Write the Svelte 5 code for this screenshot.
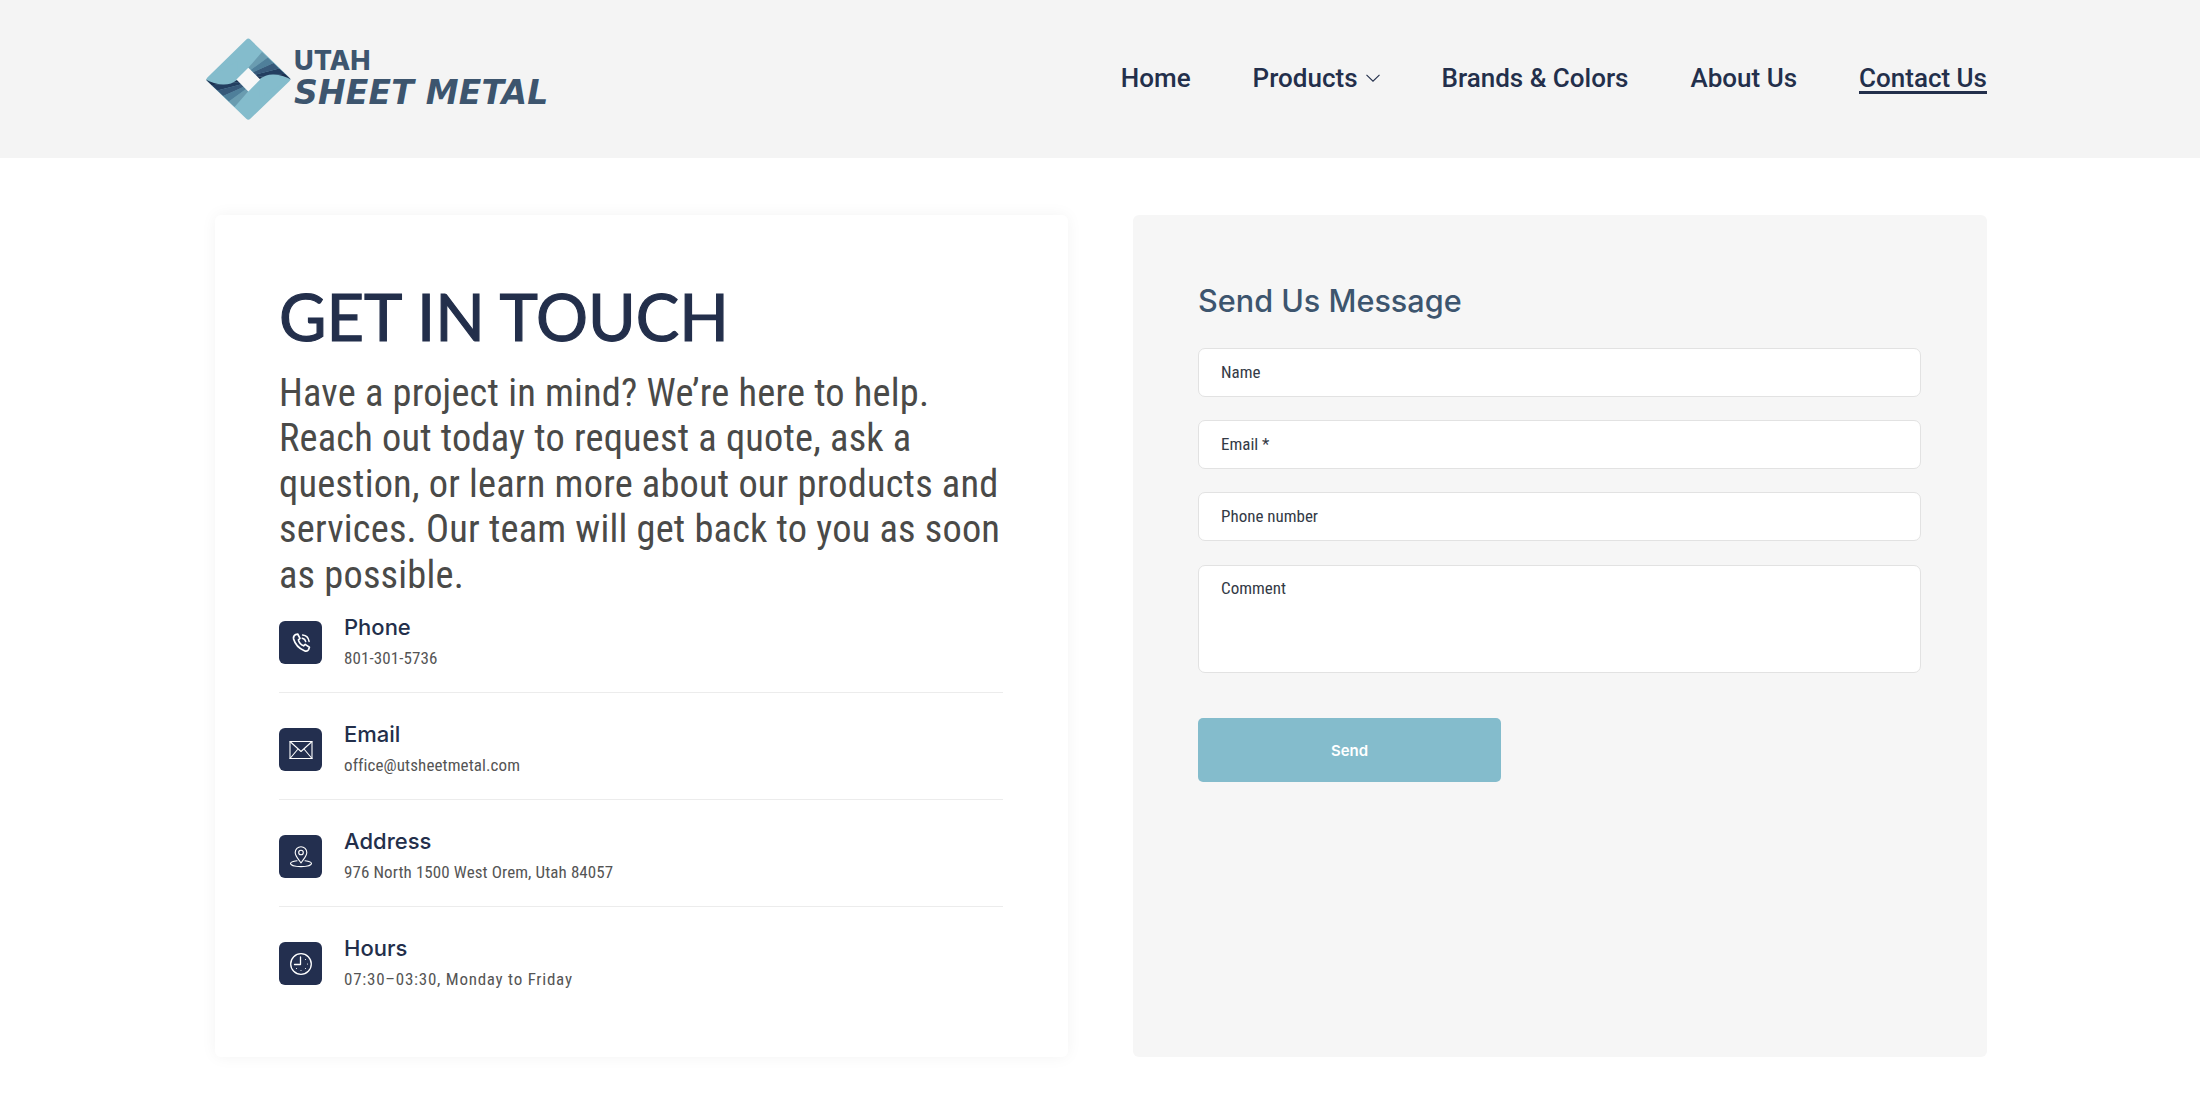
<script lang="ts">
  const navItems = [
    { label: "Home" },
    { label: "Products", caret: true },
    { label: "Brands & Colors" },
    { label: "About Us" },
    { label: "Contact Us", active: true },
  ];

  const contacts = [
    { icon: "phone", title: "Phone", text: "801-301-5736" },
    { icon: "mail", title: "Email", text: "office@utsheetmetal.com" },
    { icon: "pin", title: "Address", text: "976 North 1500 West Orem, Utah 84057" },
    { icon: "clock", title: "Hours", text: "07:30–03:30, Monday to Friday", wide: true },
  ];

  // logo stripes fan out from the white square to the outer edge
  const stripeColors = ["#6a9cb0", "#4f7f9a", "#37597a", "#233e60", "#1c3050"];
  const lerp = (a: number[], b: number[], t: number) => [a[0] + (b[0] - a[0]) * t, a[1] + (b[1] - a[1]) * t];
  const stripes = stripeColors.map((color, i) => {
    const pts = [
      lerp([56, 14], [84.7, 41.3], i / 5),
      lerp([56, 14], [84.7, 41.3], (i + 1) / 5),
      lerp([42.3, 29.7], [53.3, 41.3], (i + 1) / 5),
      lerp([42.3, 29.7], [53.3, 41.3], i / 5),
    ];
    return { color, points: pts.map((p) => p.join(",")).join(" ") };
  });
</script>

<header class="site-header">
  <a class="logo" href="#top">
    <svg class="logo-mark" viewBox="0 0 85 83" width="85" height="83" aria-hidden="true">
      <path d="M40.3 1.6 Q42.3 -.4 44.3 1.6 L83.4 39.4 Q85.3 41.3 83.4 43.2 L44.3 80.8 Q42.3 82.8 40.3 80.8 L1.4 43.2 Q-.5 41.3 1.4 39.4 Z" fill="#84bccc" />
      {#each [0, 180] as turn}
        <g transform="rotate({turn} 42.3 41.5)">
          {#each stripes as s}
            <polygon points={s.points} fill={s.color} />
          {/each}
          <path d="M53.3 41.3 Q60 36 68 36.500 Q77 37.200 84.700 41.300 L53.300 60 Z" fill="#84bccc" />
        </g>
      {/each}
      <polygon points="42.3,29.7 54.2,41.5 42.3,53.5 30.4,41.5" fill="#f7f7f7" />
    </svg>
    <span class="logo-text">
      <span class="logo-utah">UTAH</span>
      <span class="logo-sheet">SHEET METAL</span>
    </span>
  </a>

  <nav class="main-nav">
    {#each navItems as item}
      <a href="#top" class="nav-link" class:active={item.active}>
        {item.label}
        {#if item.caret}
          <svg viewBox="0 0 14 8" width="14" height="8" aria-hidden="true"><path d="M.5.8 7 7.2 13.5.8" fill="none" stroke="#232f4b" stroke-width="1.1" /></svg>
        {/if}
      </a>
    {/each}
  </nav>
</header>

<main class="contact-grid">
  <section class="info-card">
    <h1>GET IN TOUCH</h1>
    <p class="lead">Have a project in mind? We’re here to help. Reach out today to request a quote, ask a question, or learn more about our products and services. Our team will get back to you as soon as possible.</p>

    <ul class="contact-list">
      {#each contacts as c}
        <li>
          <span class="icon-box">
            <svg viewBox="0 0 24 24" width="24" height="24" fill="none" stroke="#fff" stroke-width="1.1" stroke-linecap="round" stroke-linejoin="round" aria-hidden="true">
              {#if c.icon === "phone"}
                <path d="M6.600 3.600 8.700 3 11 7.400 9.400 8.900c.6 2.500 2.600 4.900 5.200 5.900L16.200 13.400 20.400 16.200 19.600 18.600c-.8 1.400-2.600 1.900-4.200 1.200C10.200 17.600 6 12.800 4.600 8 4.200 6 5 4.400 6.600 3.600Z" stroke-width="1.700" />
                <path d="M13.200 7.200c1.800.3 3.100 1.600 3.500 3.400M13.600 4c3.400.4 6 3 6.500 6.400" stroke-width="1.500" />
              {:else if c.icon === "mail"}
                <rect x="1" y="3.500" width="22" height="17" />
                <path d="M1 3.500 12 13.500 23 3.500M1 20.500 9 11M23 20.500 15 11" />
              {:else if c.icon === "pin"}
                <path d="M12 18C9.300 14 6.200 11 6.200 7.500a5.800 5.800 0 0 1 11.600 0c0 3.500-3.100 6.500-5.800 10.500Z" />
                <circle cx="12" cy="7.500" r="2.300" />
                <path d="M8 15.800c-3.600.4-6.500 1.400-6.500 2.800 0 1.700 4.700 3 10.500 3s10.500-1.300 10.500-3c0-1.400-2.900-2.400-6.500-2.800" />
              {:else}
                <circle cx="12" cy="12" r="10.300" stroke-width="1.300" />
                <path d="M11.500 5V12.500H5.500" stroke-width="1.300" />
                <path d="M18.500 12h.01M12 18.500h.01M16.500 7.500h.01M16.500 16.500h.01M7.500 16.500h.01" />
              {/if}
            </svg>
          </span>
          <div class="contact-text">
            <h3>{c.title}</h3>
            <p class:wide={c.wide}>{c.text}</p>
          </div>
        </li>
      {/each}
    </ul>
  </section>

  <section class="form-card">
    <h2>Send Us Message</h2>
    <form class="message-form">
      <input type="text" placeholder="Name" />
      <input type="email" placeholder="Email *" />
      <input type="tel" placeholder="Phone number" />
      <textarea placeholder="Comment"></textarea>
      <button type="button">Send</button>
    </form>
  </section>
</main>

<style>
  :global(body) {
    background: #fff;
    font-family: Roboto, sans-serif;
  }

  .site-header {
    display: flex;
    align-items: center;
    justify-content: space-between;
    height: 158px;
    padding: 0 213px 0 206px;
    background: #f4f4f4;
  }

  .logo {
    display: flex;
    align-items: center;
    gap: 3px;
    text-decoration: none;
    color: #3d556e;
  }

  .logo-text {
    display: flex;
    flex-direction: column;
    margin-top: -2px;
  }

  .logo-utah {
    font: 800 27px/30px Inter, sans-serif;
  }

  .logo-sheet {
    font: italic 700 33px/34px "DejaVu Sans", sans-serif;
    letter-spacing: 0.2px;
    white-space: nowrap;
  }

  .main-nav {
    display: flex;
    gap: 62px;
  }

  .nav-link {
    display: flex;
    align-items: center;
    gap: 8px;
    padding-top: 1px;
    color: #232f4b;
    font-size: 26px;
    font-weight: 500;
    line-height: 25px;
    text-decoration: none;
    border-bottom: 3px solid transparent;
  }

  .nav-link.active {
    border-bottom-color: #232f4b;
  }

  .contact-grid {
    display: grid;
    grid-template-columns: 853px 854px;
    gap: 65px;
    padding: 57px 213px 40px 215px;
  }

  .info-card {
    height: 842px;
    box-sizing: border-box;
    padding: 63px 64px 0;
    border-radius: 6px;
    box-shadow: 0 0 16px rgba(0, 0, 0, 0.05);
  }

  h1 {
    margin: 0;
    color: #232f4b;
    font: 400 65px/76px Lato, sans-serif;
    -webkit-text-stroke: 1.200px #232f4b;
  }

  .lead {
    margin: 16px 0 0;
    color: #4a4a48;
    font: 400 38.4px/45.4px "Roboto Condensed", Roboto, sans-serif;
    font-stretch: condensed;
    letter-spacing: 0.2px;
  }

  .contact-list {
    margin: 0;
    padding: 0;
    list-style: none;
  }

  .contact-list li {
    display: flex;
    gap: 22px;
    width: 724px;
    height: 107px;
    box-sizing: border-box;
    padding-top: 35px;
    border-bottom: 1px solid #ececec;
  }

  .contact-list li:first-child {
    height: 96px;
    padding-top: 24px;
  }

  .contact-list li:last-child {
    border-bottom: 0;
  }

  .icon-box {
    display: flex;
    flex: none;
    align-items: center;
    justify-content: center;
    width: 43px;
    height: 43px;
    border-radius: 6px;
    background: #232f4f;
  }

  .contact-text {
    margin-top: -9px;
  }

  h3 {
    margin: 0;
    color: #232f4b;
    font: 500 22px/30px Inter, sans-serif;
  }

  .contact-text p {
    margin: 4px 0 0;
    color: #555;
    font: 400 17px/24px "Roboto Condensed", Roboto, sans-serif;
    font-stretch: condensed;
    letter-spacing: 0.1px;
  }

  .contact-text p.wide {
    letter-spacing: 0.75px;
  }

  .form-card {
    height: 842px;
    box-sizing: border-box;
    padding: 65px 66px 0 65px;
    border-radius: 6px;
    background: #f6f6f6;
  }

  h2 {
    margin: 0 0 26px;
    color: #3d556e;
    font: 500 30.600px/42px Inter, sans-serif;
  }

  .message-form {
    display: flex;
    flex-direction: column;
    align-items: flex-start;
    gap: 23px;
  }

  input,
  textarea {
    display: block;
    width: 100%;
    height: 49px;
    box-sizing: border-box;
    padding: 0 22px 2px;
    border: 1.5px solid #e2e2e2;
    border-radius: 7px;
    background: #fff;
    font: 400 17px "Roboto Condensed", Roboto, sans-serif;
    font-stretch: condensed;
  }

  input::placeholder,
  textarea::placeholder {
    color: #333a46;
    opacity: 1;
  }

  textarea {
    height: 108px;
    margin-top: 1px;
    padding-top: 12px;
    resize: none;
  }

  button {
    width: 303px;
    height: 64px;
    margin-top: 22px;
    border: 0;
    border-radius: 5px;
    background: #84bccc;
    color: #fff;
    font: 600 15px Inter, sans-serif;
  }
</style>
